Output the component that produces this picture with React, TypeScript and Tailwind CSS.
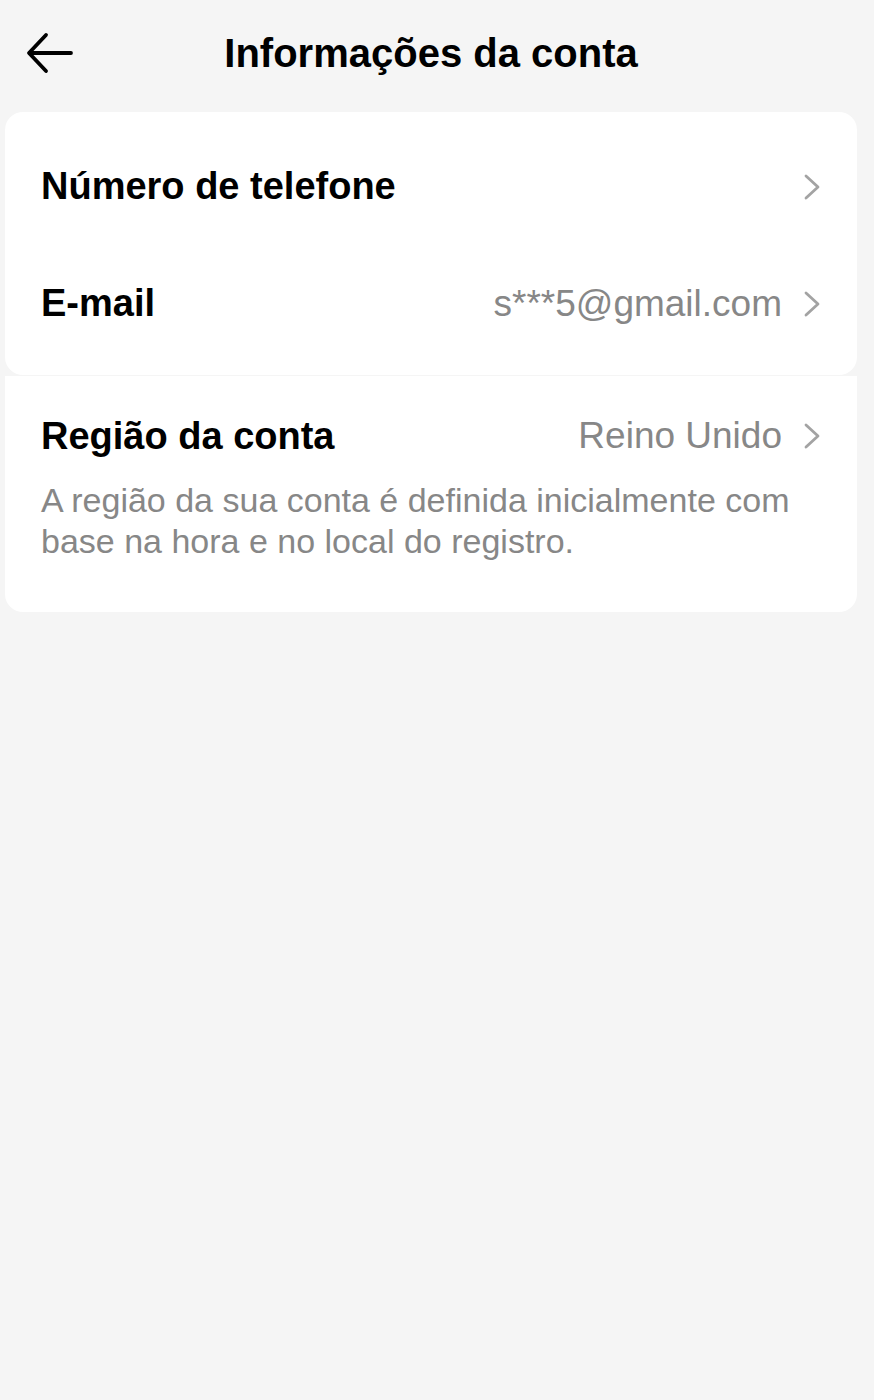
import React from 'react'

function BackArrow() {
  return (
    <svg width="48" height="42" viewBox="0 0 48 42" fill="none" stroke="#000" strokeWidth="3.8" strokeLinecap="round" strokeLinejoin="round">
      <path d="M45 21H4" />
      <path d="M20 3L3 21L20 39" />
    </svg>
  )
}

function Chevron() {
  return (
    <svg width="16" height="26" viewBox="0 0 16 26" fill="none" stroke="#a3a3a3" strokeWidth="2.8" strokeLinecap="round" strokeLinejoin="round">
      <path d="M2 2L14 13L2 24" />
    </svg>
  )
}

function Row({ label, value }: { label: string; value?: string }) {
  return (
    <div className="h-[117px] flex items-center pl-[36px] pr-[37px]">
      <span className="flex-1 text-[38px] font-bold text-black">{label}</span>
      {value && <span className="text-[37px] text-[#878787] mr-[22px]">{value}</span>}
      <Chevron />
    </div>
  )
}

export default function App() {
  return (
    <div className="min-h-[1400px] bg-[#f5f5f5]" style={{ fontFamily: '"Liberation Sans", Arial, sans-serif' }}>
      <header className="h-[106px] relative flex items-center justify-center">
        <button className="absolute left-[26px] top-[32px]"><BackArrow /></button>
        <h1 className="text-[40px] font-bold text-black -ml-[12px]">Informações da conta</h1>
      </header>

      <div className="mt-[6px] ml-[5px] w-[852px]">
        <div className="bg-white rounded-[18px] pt-[16px] pb-[13px]">
          <Row label="Número de telefone" />
          <Row label="E-mail" value="s***5@gmail.com" />
        </div>

        <div className="bg-white rounded-b-[18px] mt-px pt-[16px] pb-[50px]">
          <div className="h-[88px] flex items-center pl-[36px] pr-[37px]">
            <span className="flex-1 text-[38px] font-bold text-black">Região da conta</span>
            <span className="text-[37px] text-[#878787] mr-[22px]">Reino Unido</span>
            <Chevron />
          </div>
          <p className="pl-[36px] pr-[40px] text-[34px] leading-[41px] text-[#878787]">
            A região da sua conta é definida inicialmente com base na hora e no local do registro.
          </p>
        </div>
      </div>
    </div>
  )
}
